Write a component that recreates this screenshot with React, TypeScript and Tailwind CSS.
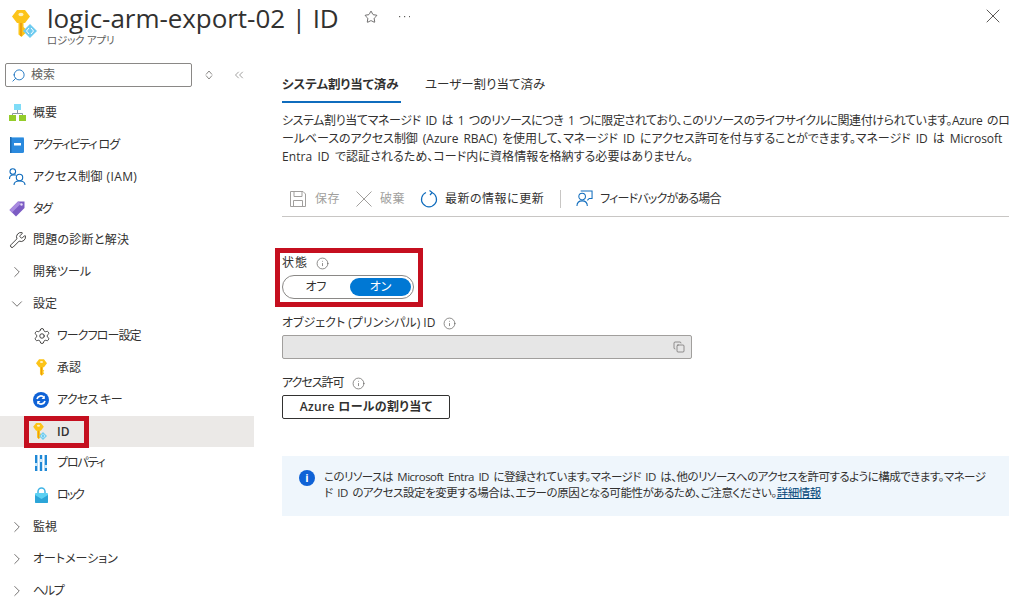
import { ChevronDown, ChevronRight, ChevronsLeft, Copy, Info, Search, Settings, Star, Wrench, X } from "lucide-react";
import type { ReactNode } from "react";

const font = "font-['Open_Sans','Noto_Sans_CJK_JP',sans-serif] [font-feature-settings:'palt']";

function KeyIcon({ className }: { className: string }) {
  return (
    <svg viewBox="0 0 18 27" className={className}>
      <path d="M5 0H13L18 6.500 13 13H11.500V17L13.500 19 11.500 21 13.500 23 9.500 27 6.500 24.500V13H5L0 6.500Z" fill="#fcc419" />
      <path d="M9 13V26" stroke="#eb9a0e" strokeWidth="1.600" />
      <ellipse cx="9" cy="4.500" rx="2.600" ry="1.700" fill="#fff3c4" />
    </svg>
  );
}

function IdentityIcon({ size }: { size: "lg" | "sm" }) {
  return (
    <span className={size === "lg" ? "relative block w-[25px] h-[28px]" : "relative block w-[14px] h-[17px]"}>
      <KeyIcon className={size === "lg" ? "w-[18px] h-[27px]" : "w-[11px] h-[16px]"} />
      <svg viewBox="0 0 14 14" className={size === "lg" ? "absolute right-[0px] bottom-0 w-[14px] h-[14px]" : "absolute right-0 bottom-0 w-[8px] h-[8px]"}>
        <path d="M7 0 14 7 7 14 0 7Z" fill="#6ecbf0" />
        <path d="M6 4 3.500 7 6 10M8 4 10.500 7 8 10" stroke="#fff" fill="none" />
      </svg>
    </span>
  );
}

function NavIcon({ name }: { name: string }) {
  switch (name) {
    case "overview":
      return (
        <svg viewBox="0 0 17 17" className="w-[17px] h-[17px]">
          <rect x="5" y="0" width="7" height="6" fill="#7fdcf7" />
          <path d="M8.500 6V10M3.500 12V9.500H13.500V12" stroke="#8d98a5" fill="none" />
          <rect x="0" y="11" width="7" height="6" fill="#94cc2a" />
          <rect x="10" y="11" width="7" height="6" fill="#94cc2a" />
        </svg>
      );
    case "log":
      return (
        <svg viewBox="0 0 14 16" className="w-[14px] h-[16px] ml-[1px]">
          <rect width="14" height="16" rx="1.500" fill="#2b8ade" />
          <rect x="1" y="0" width="12" height="1" fill="#7cbcef" />
          <rect x="0" width="1.500" height="16" fill="#1b6ab3" />
          <rect x="4" y="6" width="7" height="2.500" fill="#fff" />
        </svg>
      );
    case "iam":
      return (
        <svg viewBox="0 0 17 17" className="w-[17px] h-[17px] text-[#0f6cbd]" fill="none" stroke="currentColor" strokeWidth="1.100">
          <circle cx="3.800" cy="3.500" r="2.800" />
          <path d="M0.500 11C0.500 8.500 2 7 4 7H7" />
          <circle cx="10.500" cy="9.500" r="3.200" />
          <path d="M5 17C5 14.500 7.500 13 10.500 13S16 14.500 16 17" />
        </svg>
      );
    case "tag":
      return (
        <svg viewBox="0 0 16 16" className="w-[16px] h-[16px]">
          <path d="M9 0.500H15.500V7L7 15.500 0.500 9Z" fill="#7c5cc4" />
          <path d="M9 0.500 0.500 9 3 11.500 12 2.500Z" fill="#a98be0" />
          <circle cx="12.500" cy="3.500" r="1.200" fill="#e6dcf7" />
        </svg>
      );
    case "wrench":
      return <Wrench className="w-[18px] h-[18px] text-[#323130]" strokeWidth={1.2} />;
    case "gear":
      return <Settings className="w-[18px] h-[18px] text-[#323130]" strokeWidth={1.2} />;
    case "key":
      return <KeyIcon className="w-[11px] h-[17px] ml-[3px]" />;
    case "access":
      return (
        <svg viewBox="0 0 16 16" className="w-[16px] h-[16px]">
          <circle cx="8" cy="8" r="8" fill="#0f62d6" />
          <path d="M4 7A4 4 0 0 1 11 5.500M12 9A4 4 0 0 1 5 10.500" stroke="#fff" strokeWidth="1.700" fill="none" />
          <path d="M11.800 3.500V7H8.500ZM4.200 12.500V9H7.500Z" fill="#fff" />
        </svg>
      );
    case "id":
      return <IdentityIcon size="sm" />;
    case "props":
      return (
        <svg viewBox="0 0 12 16" className="w-[12px] h-[16px] ml-[2px]">
          <rect x="0" width="2.400" height="16" fill="#1e88d6" />
          <rect x="4.800" width="2.400" height="16" fill="#1e88d6" />
          <rect x="9.600" width="2.400" height="16" fill="#1e88d6" />
          <rect x="0" y="8" width="2.400" height="3" fill="#cdeafc" />
          <rect x="4.800" y="4" width="2.400" height="3" fill="#cdeafc" />
          <rect x="9.600" y="10" width="2.400" height="3" fill="#cdeafc" />
        </svg>
      );
    case "lock":
      return (
        <svg viewBox="0 0 13 16" className="w-[13px] h-[16px] ml-[2px]">
          <path d="M3 7V4.500A3.500 3.500 0 0 1 10 4.500V7" stroke="#3fb4e6" strokeWidth="1.500" fill="none" />
          <rect y="6" width="13" height="10" rx="1" fill="#5bd0f2" />
          <path d="M0 8 6.500 12 13 8V15A1 1 0 0 1 12 16H1A1 1 0 0 1 0 15Z" fill="#2ca5d8" />
        </svg>
      );
    default:
      return null;
  }
}

function TopItem({ icon, label, tracking }: { icon: string; label: string; tracking?: string }) {
  return (
    <div className="flex items-center h-[31.87px] pl-[9px] text-[12px] text-[#323130]">
      <span className="w-[24px] flex justify-start">
        <NavIcon name={icon} />
      </span>
      <span className={tracking}>{label}</span>
    </div>
  );
}

function GroupItem({ label, open, tracking }: { label: string; open?: boolean; tracking?: string }) {
  const Chevron = open ? ChevronDown : ChevronRight;
  return (
    <div className="flex items-center h-[31.87px] pl-[8px] text-[12px] text-[#323130]">
      <span className="w-[25px]">
        <Chevron className="w-[18px] h-[18px] text-[#484644]" strokeWidth={1} />
      </span>
      <span className={tracking}>{label}</span>
    </div>
  );
}

function SubItem({ icon, label, active, tracking }: { icon: string; label: string; active?: boolean; tracking?: string }) {
  return (
    <div className={`relative flex items-center h-[31.87px] pl-[33px] text-[12px] text-[#323130] ${active ? "bg-[#ebe9e7] font-semibold" : ""}`}>
      <span className="w-[24px] flex justify-start">
        <NavIcon name={icon} />
      </span>
      <span className={tracking}>{label}</span>
      {active && <span className="absolute left-[24px] top-0 w-[65px] h-[32px] border-[5px] border-[#c50f1f]" />}
    </div>
  );
}

function FieldLabel({ children, tracking }: { children: ReactNode; tracking?: string }) {
  return (
    <div className="flex items-center gap-[8px] text-[12px] leading-[16px] text-[#323130]">
      <span className={tracking}>{children}</span>
      <Info className="w-[13px] h-[13px] text-[#605e5c]" strokeWidth={1.3} />
    </div>
  );
}

function Sidebar() {
  return (
    <aside className="w-[254px] shrink-0">
      <div className="flex items-center pl-[5px] h-[24px] mt-[1px]">
        <div className="flex items-center w-[187px] h-[24px] border border-[#8a8886] rounded-[2px] pl-[5px] text-[12px] text-[#605e5c]">
          <Search className="w-[15px] h-[15px] text-[#0f6cbd] mr-[5px] -scale-x-100" strokeWidth={1.4} />
          検索
        </div>
        <svg viewBox="0 0 8 10" className="w-[8px] h-[10px] ml-[13px]">
          <path d="M4 1 7 4.500M4 1 1 4.500M4 9 7 5.500M4 9 1 5.500" stroke="#8a8886" fill="none" />
        </svg>
        <ChevronsLeft className="w-[14px] h-[14px] ml-[19px] text-[#797775]" strokeWidth={1.2} />
      </div>
      <div className="mt-[10px]">
        <TopItem icon="overview" label="概要" />
        <TopItem icon="log" label="アクティビティ ログ" tracking="tracking-[-1.1px]" />
        <TopItem icon="iam" label="アクセス制御 (IAM)" tracking="tracking-[0.4px]" />
        <TopItem icon="tag" label="タグ" tracking="tracking-[-1.500px]" />
        <TopItem icon="wrench" label="問題の診断と解決" tracking="tracking-[0.25px]" />
        <GroupItem label="開発ツール" />
        <GroupItem label="設定" open />
        <SubItem icon="gear" label="ワークフロー設定" tracking="tracking-[-0.9px]" />
        <SubItem icon="key" label="承認" />
        <SubItem icon="access" label="アクセス キー" tracking="tracking-[-0.7px]" />
        <SubItem icon="id" label="ID" active />
        <SubItem icon="props" label="プロパティ" tracking="tracking-[-1.2px]" />
        <SubItem icon="lock" label="ロック" tracking="tracking-[-2px]" />
        <GroupItem label="監視" />
        <GroupItem label="オートメーション" />
        <GroupItem label="ヘルプ" tracking="tracking-[-1.300px]" />
      </div>
    </aside>
  );
}

function Toolbar() {
  return (
    <div className="flex items-center h-[36px] mt-[15px] pl-[8px] border-b border-[#c8c6c4] text-[12px]">
      <svg viewBox="0 0 16 16" className="w-[16px] h-[16px] text-[#a19f9d]" fill="none" stroke="currentColor">
        <path d="M0.500 0.500H13L15.500 3V15.500H0.500Z" />
        <path d="M4 0.500V5.500H12V0.500M3.500 15.500V9.500H12.500V15.500" />
      </svg>
      <span className="ml-[9px] text-[#a19f9d] tracking-[0.5px]">保存</span>
      <svg viewBox="0 0 16 16" className="ml-[16px] w-[16px] h-[16px] text-[#a19f9d]" fill="none" stroke="currentColor">
        <path d="M0.500 0.500 15.500 15.500M15.500 0.500 0.500 15.500" />
      </svg>
      <span className="ml-[8px] text-[#a19f9d] tracking-[0.5px]">破棄</span>
      <svg viewBox="0 0 18 18" className="ml-[15px] w-[18px] h-[18px] text-[#0f6cbd]" fill="none" stroke="currentColor" strokeWidth="1.200">
        <path d="M6 2.500A7.500 7.500 0 1 0 12 2.500M9.500 0.500 12.200 2.500 10 5" />
      </svg>
      <span className="ml-[7px] text-[#323130] tracking-[0.5px]">最新の情報に更新</span>
      <span className="ml-[16px] w-px h-[18px] bg-[#c8c6c4]" />
      <svg viewBox="0 0 18 18" className="ml-[15px] w-[17px] h-[17px] text-[#0f6cbd]" fill="none" stroke="currentColor" strokeWidth="1.100">
        <circle cx="6.500" cy="7" r="3.500" />
        <path d="M1 17C1 13 3.500 11.500 6.500 11.500S12 13 12 17M5 1H17V9H14L12 11" />
      </svg>
      <span className="ml-[7px] text-[#323130] tracking-[-0.8px]">フィードバックがある場合</span>
    </div>
  );
}

export default function App() {
  return (
    <div className={`w-[1019px] h-[613px] overflow-hidden bg-white ${font}`}>
      <header className="flex h-[62px]">
        <div className="pl-[12px] pt-[10px] w-[47px] shrink-0">
          <IdentityIcon size="lg" />
        </div>
        <div className="flex-1 min-w-0">
          <div className="flex items-center h-[36px]">
            <h1 className="text-[26px] leading-[36px] font-medium whitespace-nowrap text-[#323130] tracking-[-0.05px] [font-feature-settings:normal]">logic-arm-export-02 | ID</h1>
            <Star className="ml-[25px] mb-[3px] w-[14px] h-[14px] text-[#323130]" strokeWidth={1.2} />
            <svg viewBox="0 0 11 2" className="ml-[21px] mb-[3px] w-[11px] h-[2px] text-[#605e5c]" fill="currentColor">
              <rect x="0" width="1.200" height="1.200" />
              <rect x="5" width="1.200" height="1.200" />
              <rect x="10" width="1.200" height="1.200" />
            </svg>
            <X className="ml-auto mr-[14px] mb-[4px] w-[24px] h-[24px] text-[#484644]" strokeWidth={0.9} />
          </div>
          <div className="text-[10.500px] leading-[14px] -mt-[3px] text-[#605e5c] tracking-[-0.2px]">ロジック アプリ</div>
        </div>
      </header>
      <div className="flex">
        <Sidebar />
        <main className="flex-1 min-w-0 pl-[28px] pr-[10px]">
          <div className="flex text-[12.500px] h-[41px] text-[#323130]">
            <div className="h-[41px] w-[119px] pt-[14px] font-semibold whitespace-nowrap border-b-2 border-[#0f6cbd]">システム割り当て済み</div>
            <div className="ml-[24px] pt-[14px] whitespace-nowrap">ユーザー割り当て済み</div>
          </div>
          <div className="mt-[9px] text-[12px] leading-[18px] text-[#323130] whitespace-nowrap [word-spacing:2px]">
            <p className="tracking-[-0.39px]">システム割り当てマネージド ID は 1 つのリソースにつき 1 つに限定されており、このリソースのライフサイクルに関連付けられています。Azure のロ</p>
            <p className="tracking-[-0.05px]">ールベースのアクセス制御 (Azure RBAC) を使用して、マネージド ID にアクセス許可を付与することができます。マネージド ID は Microsoft</p>
            <p className="tracking-[0.07px]">Entra ID で認証されるため、コード内に資格情報を格納する必要はありません。</p>
          </div>
          <Toolbar />
          <section className="mt-[38px]">
            <div className="relative">
              <span className="absolute -left-[7px] -top-[7px] w-[148px] h-[59px] border-[5px] border-[#c50f1f]" />
              <FieldLabel tracking="tracking-[1px]">状態</FieldLabel>
              <div className="mt-[4px] flex items-center w-[132px] h-[24px] border border-[#8a8886] rounded-full p-[2px] text-[12px]">
                <span className="w-[62px] text-center text-[#323130]">オフ</span>
                <span className="ml-[3px] flex-1 h-[18px] leading-[18px] rounded-full bg-[#0078d4] text-center text-white">オン</span>
              </div>
            </div>
            <div className="mt-[16px]">
              <FieldLabel>オブジェクト (プリンシパル) ID</FieldLabel>
              <div className="mt-[4px] flex items-center justify-end w-[410px] h-[24px] pr-[6px] bg-[#e6e6e6] border border-[#a19f9d] rounded-[2px]">
                <Copy className="w-[12px] h-[12px] text-[#605e5c]" strokeWidth={1.3} />
              </div>
            </div>
            <div className="mt-[16px]">
              <FieldLabel tracking="tracking-[-1px]">アクセス許可</FieldLabel>
              <button className="mt-[4px] block w-[168px] h-[24px] border border-[#323130] rounded-[2px] text-[12px] font-semibold tracking-[0.35px] whitespace-nowrap text-[#323130]">Azure ロールの割り当て</button>
            </div>
          </section>
          <div className="mt-[37px] flex h-[60px] pt-[13px] pl-[17px] bg-[#eff6fc]">
            <span className="w-[16px] h-[16px] rounded-full bg-[#0f62d6] text-white text-[11px] leading-[16px] font-bold text-center shrink-0 mt-[1px]">i</span>
            <div className="ml-[9px] text-[11.500px] leading-[16px] text-[#323130] whitespace-nowrap [word-spacing:2px]">
              <p className="tracking-[-0.52px]">このリソースは Microsoft Entra ID に登録されています。マネージド ID は、他のリソースへのアクセスを許可するように構成できます。マネージ</p>
              <p className="tracking-[-0.45px]">
                ド ID のアクセス設定を変更する場合は、エラーの原因となる可能性があるため、ご注意ください。
                <a className="text-[#004578] underline">詳細情報</a>
              </p>
            </div>
          </div>
        </main>
      </div>
    </div>
  );
}
